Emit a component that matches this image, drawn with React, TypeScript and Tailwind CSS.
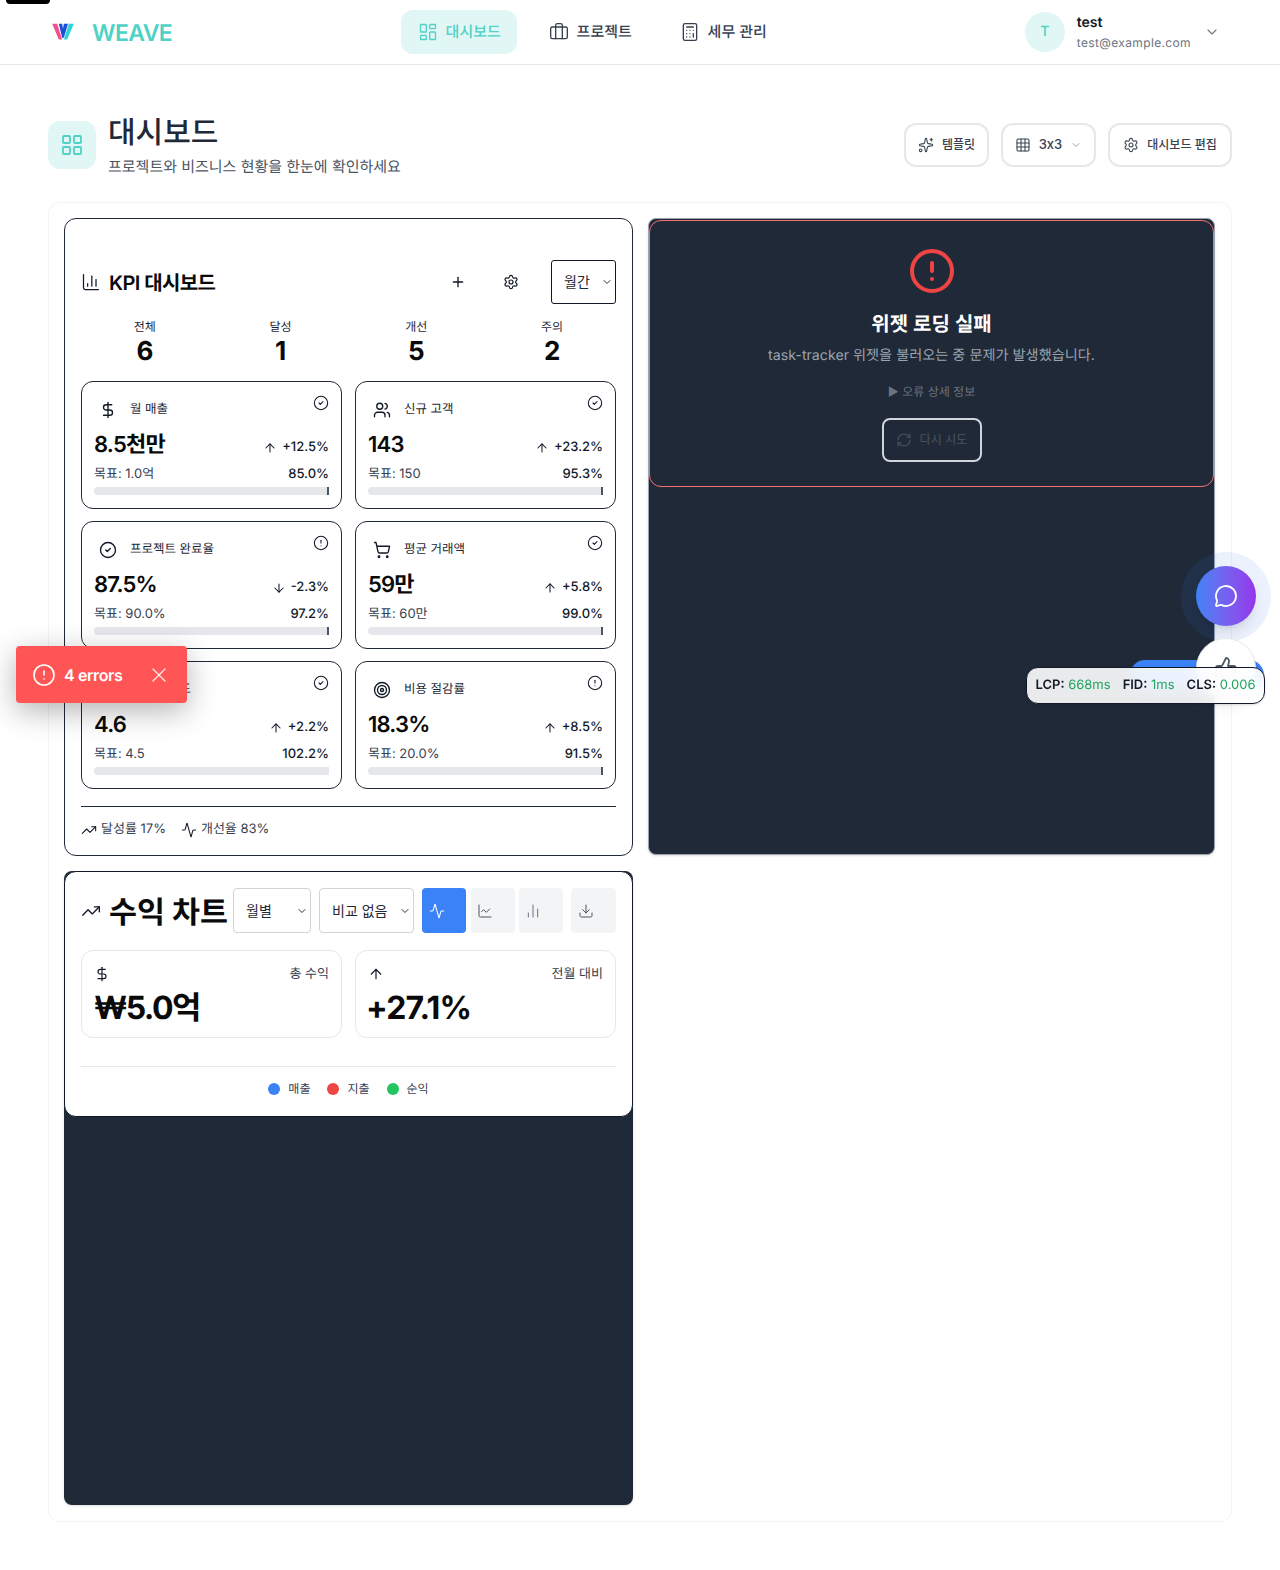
import React from 'react';
import {
  Activity, ArrowDown, ArrowUp, Briefcase, Calculator, ChartColumn, ChartLine, ChartNoAxesColumn, ChevronDown,
  CircleAlert, CircleCheck, DollarSign, Download, Grid3x3, LayoutDashboard, LayoutGrid, MessageCircle, Plus, RefreshCw,
  Settings, ShoppingCart, Sparkles, Star, Target, ThumbsUp, TrendingUp, Users, X,
} from 'lucide-react';

const kpis = [
  { icon: DollarSign, label: '월 매출', value: '8.5천만', up: true, delta: '+12.5%', target: '목표: 1.0억', pct: '85.0%', ok: true, tick: true },
  { icon: Users, label: '신규 고객', value: '143', up: true, delta: '+23.2%', target: '목표: 150', pct: '95.3%', ok: true, tick: true },
  { icon: CircleCheck, label: '프로젝트 완료율', value: '87.5%', up: false, delta: '-2.3%', target: '목표: 90.0%', pct: '97.2%', ok: false, tick: true },
  { icon: ShoppingCart, label: '평균 거래액', value: '59만', up: true, delta: '+5.8%', target: '목표: 60만', pct: '99.0%', ok: true, tick: true },
  { icon: Star, label: '고객 만족도', value: '4.6', up: true, delta: '+2.2%', target: '목표: 4.5', pct: '102.2%', ok: true, tick: false },
  { icon: Target, label: '비용 절감률', value: '18.3%', up: true, delta: '+8.5%', target: '목표: 20.0%', pct: '91.5%', ok: false, tick: true },
];

const stats = [
  { label: '전체', value: '6' },
  { label: '달성', value: '1' },
  { label: '개선', value: '5' },
  { label: '주의', value: '2' },
];

function Select({ label, className }: { label: string; className: string }) {
  return (
    <div className={`relative ${className}`}>
      <select className="h-full w-full appearance-none bg-transparent pl-3 text-sm text-[#1f2937]">
        <option>{label}</option>
      </select>
      <ChevronDown className="pointer-events-none absolute right-[2px] top-1/2 h-3 w-3 -translate-y-1/2 text-[#111827]" strokeWidth={1.8} />
    </div>
  );
}

function KpiCard({ kpi }: { kpi: (typeof kpis)[number] }) {
  const Icon = kpi.icon;
  const StatusIcon = kpi.ok ? CircleCheck : CircleAlert;
  const Arrow = kpi.up ? ArrowUp : ArrowDown;
  return (
    <div className="relative h-[128px] rounded-xl border border-[#1f2937] bg-white px-[12px] pt-[16px]">
      <StatusIcon className="absolute right-[12px] top-[13px] h-4 w-4 text-[#111827]" strokeWidth={1.6} />
      <div className="flex h-[24px] items-center">
        <span className="flex w-[28px] justify-center">
          <Icon className="h-[18px] w-[18px] text-[#111827]" strokeWidth={1.8} />
        </span>
        <span className="ml-[8px] text-[12.5px] text-[#1f2937]">{kpi.label}</span>
      </div>
      <div className="mt-[9px] flex h-[28px] items-center justify-between">
        <span className="text-[22px] font-semibold tracking-[-0.035em] text-[#0a0a0a]">{kpi.value}</span>
        <span className="mt-[5px] flex items-center gap-[5px] text-[13px] font-medium text-[#111827]">
          <Arrow className="h-[14px] w-[14px]" strokeWidth={1.8} />
          {kpi.delta}
        </span>
      </div>
      <div className="mt-[6px] flex h-[20px] items-center justify-between">
        <span className="text-[13px] text-[#374151]">{kpi.target}</span>
        <span className="text-[13px] font-medium text-[#111827]">{kpi.pct}</span>
      </div>
      <div className="mt-[2px] flex h-2 justify-end rounded-l-full rounded-r-sm bg-[#e5e7eb]">
        {kpi.tick && <div className="h-2 w-[2px] bg-[#475569]" />}
      </div>
    </div>
  );
}

function KpiWidget() {
  return (
    <div className="h-[638px] rounded-xl border border-[#1f2937] bg-white px-4 pt-[41px]">
      <div className="flex h-[44px] items-center">
        <ChartColumn className="h-5 w-5 text-[#111827]" strokeWidth={1.5} />
        <h2 className="ml-[8px] mt-[1px] text-xl font-semibold tracking-[-0.03em] text-[#0a0a0a]">KPI 대시보드</h2>
        <Plus className="ml-auto h-4 w-4 text-[#111827]" strokeWidth={2} />
        <Settings className="ml-[37px] h-4 w-4 text-[#111827]" strokeWidth={1.8} />
        <Select label="월간" className="ml-[32px] h-[44px] w-[65px] rounded-[3px] border border-[#111827]" />
      </div>
      <div className="mt-[15px] grid grid-cols-4 gap-2 text-center">
        {stats.map((s) => (
          <div key={s.label} className="flex flex-col items-center">
            <span className="text-xs leading-4 text-[#1f2937]">{s.label}</span>
            <span className="mt-[2px] h-[29px] text-[26px] font-bold leading-[30px] text-[#0a0a0a]">{s.value}</span>
          </div>
        ))}
      </div>
      <div className="mt-[15px] grid grid-cols-2 gap-x-[13px] gap-y-[12px]">
        {kpis.map((k) => (
          <KpiCard key={k.label} kpi={k} />
        ))}
      </div>
      <div className="mt-[17px] flex items-center gap-[15px] border-t border-[#1f2937] pt-[13px] text-[13px] text-[#374151]">
        <span className="flex items-center gap-1">
          <TrendingUp className="h-4 w-4 text-[#111827]" strokeWidth={1.6} />
          달성률 17%
        </span>
        <span className="flex items-center gap-1">
          <Activity className="h-4 w-4 text-[#111827]" strokeWidth={1.6} />
          개선율 83%
        </span>
      </div>
    </div>
  );
}

function ErrorWidget() {
  return (
    <div className="h-[637px] rounded-lg border border-[#9ca3af] bg-[#1f2937] pt-px shadow-sm">
      <div className="flex h-[267px] flex-col items-center rounded-xl border border-[#f87171] pt-[26px]">
        <CircleAlert className="h-12 w-12 text-[#ef4444]" strokeWidth={2} />
        <h3 className="mt-[15px] text-xl font-semibold leading-7 text-white">위젯 로딩 실패</h3>
        <p className="mt-[4px] text-[14.2px] leading-7 text-[#9ca3af]">task-tracker 위젯을 불러오는 중 문제가 발생했습니다.</p>
        <p className="mt-[12px] text-xs leading-5 text-[#6b7280]">▶ 오류 상세 정보</p>
        <button className="mt-[16px] flex h-[44px] w-[100px] items-center justify-center gap-2 rounded-lg border-2 border-[#d1d5db] text-xs text-[#4b5563]">
          <RefreshCw className="h-4 w-4" strokeWidth={1.6} />
          다시 시도
        </button>
      </div>
    </div>
  );
}

function RevenueWidget() {
  return (
    <div className="h-[634px] rounded-lg bg-[#1f2937] shadow-sm">
      <div className="h-[246px] rounded-xl border border-[#111827] bg-white px-4 pt-4">
        <div className="flex h-[45px] items-center">
          <TrendingUp className="h-5 w-5 text-[#111827]" strokeWidth={1.6} />
          <h2 className="ml-[8px] mt-[7px] whitespace-nowrap text-[30.4px] font-bold text-[#0a0a0a]">수익 차트</h2>
          <Select label="월별" className="ml-[5px] h-[45px] w-[78px] rounded-[4px] border border-[#d1d5db]" />
          <Select label="비교 없음" className="ml-2 h-[45px] w-[95px] rounded-[4px] border border-[#d1d5db]" />
          <div className="ml-2 flex h-[45px] w-[44px] items-center rounded-[4px] bg-[#3b82f6] pl-[7px]">
            <Activity className="h-4 w-4 text-white" strokeWidth={1.6} />
          </div>
          <div className="ml-[5px] flex h-[45px] w-[44px] items-center rounded-[4px] bg-[#f3f4f6] pl-[6px]">
            <ChartLine className="h-4 w-4 text-[#4b5563]" strokeWidth={1.5} />
          </div>
          <div className="ml-[4px] flex h-[45px] w-[44px] items-center rounded-[4px] bg-[#f3f4f6] pl-[6px]">
            <ChartNoAxesColumn className="h-4 w-4 text-[#6b7280]" strokeWidth={1.5} />
          </div>
          <div className="ml-[8px] flex h-[45px] w-[45px] items-center rounded-[4px] bg-[#f3f4f6] pl-[7px]">
            <Download className="h-4 w-4 text-[#4b5563]" strokeWidth={1.5} />
          </div>
        </div>
        <div className="mt-[17px] grid grid-cols-2 gap-[13px]">
          <div className="h-[88px] rounded-xl border border-[#e5e7eb] px-[12px] pt-[14px]">
            <div className="flex items-center justify-between">
              <DollarSign className="-mt-[2px] h-4 w-4 text-[#111827]" strokeWidth={1.8} />
              <span className="text-[13px] text-[#374151]">총 수익</span>
            </div>
            <p className="mt-[3px] text-[32px] font-bold leading-10 tracking-[-0.05em] text-[#0a0a0a]">₩5.0억</p>
          </div>
          <div className="h-[88px] rounded-xl border border-[#e5e7eb] px-[12px] pt-[14px]">
            <div className="flex items-center justify-between">
              <ArrowUp className="-mt-[2px] h-4 w-4 text-[#111827]" strokeWidth={1.8} />
              <span className="text-[13px] text-[#374151]">전월 대비</span>
            </div>
            <p className="-ml-[2px] mt-[3px] text-[32px] font-bold leading-10 tracking-tight text-[#0a0a0a]">+27.1%</p>
          </div>
        </div>
        <div className="mt-[28px] flex items-center justify-center gap-[17px] border-t border-[#e5e7eb] pt-[14px] text-xs text-[#374151]">
          <span className="flex items-center gap-2"><i className="h-3 w-3 rounded-full bg-[#3b82f6]" />매출</span>
          <span className="flex items-center gap-2"><i className="h-3 w-3 rounded-full bg-[#ef4444]" />지출</span>
          <span className="flex items-center gap-2"><i className="h-3 w-3 rounded-full bg-[#22c55e]" />순익</span>
        </div>
      </div>
    </div>
  );
}

function Header() {
  return (
    <header className="flex h-[65px] items-center border-b border-[#e5e7eb] bg-white pl-[50px] pr-[60px]">
      <svg viewBox="0 0 28 24" className="h-[20px] w-[26px]">
        <path d="M1 2h6l6 19h-4z" fill="#f0508f" />
        <path d="M27 2h-6l-6 19h4z" fill="#2dd4d4" />
        <path d="M9 2h4l1 6 1-6h5l-5 17h-2z" fill="#1d4ed8" />
      </svg>
      <span className="ml-[16px] mt-[2px] text-[23px] font-semibold tracking-tight text-[#4fd1c5]">WEAVE</span>
      <nav className="ml-[229px] flex items-center text-[15px] font-medium text-[#374151]">
        <a className="flex h-11 w-[116px] items-center justify-center gap-2 rounded-xl bg-[#e0f7f5] text-[#4fd1c5]">
          <LayoutDashboard className="h-5 w-5" strokeWidth={1.6} />
          대시보드
        </a>
        <a className="ml-[15px] flex h-11 w-[116px] items-center justify-center gap-2">
          <Briefcase className="h-5 w-5" strokeWidth={1.6} />
          프로젝트
        </a>
        <a className="ml-[17px] flex h-11 w-[116px] items-center justify-center gap-2">
          <Calculator className="h-5 w-5" strokeWidth={1.6} />
          세무 관리
        </a>
      </nav>
      <div className="ml-auto flex items-center">
        <div className="flex h-10 w-10 items-center justify-center rounded-full bg-[#e0f7f5] text-sm font-medium text-[#4fd1c5]">T</div>
        <div className="ml-3 mt-[2px] flex flex-col">
          <span className="text-sm font-semibold leading-5 text-[#111827]">test</span>
          <span className="text-xs leading-5 tracking-[0.03em] text-[#6b7280]">test@example.com</span>
        </div>
        <ChevronDown className="ml-[13px] h-4 w-4 text-[#6b7280]" strokeWidth={1.6} />
      </div>
    </header>
  );
}

function PageTitle() {
  return (
    <div className="flex items-start justify-between pl-[48px] pr-[48px] pt-[50px]">
      <div className="flex items-start gap-3">
        <div className="mt-[6px] flex h-12 w-12 items-center justify-center rounded-xl bg-[#e0f7f5]">
          <LayoutGrid className="h-6 w-6 text-[#4fd1c5]" strokeWidth={1.8} />
        </div>
        <div>
          <h1 className="text-3xl font-medium leading-9 text-[#1f2937]">대시보드</h1>
          <p className="mt-[4px] text-[15px] leading-6 text-[#4b5563]">프로젝트와 비즈니스 현황을 한눈에 확인하세요</p>
        </div>
      </div>
      <div className="mt-[8px] flex items-center gap-3 text-xs font-medium text-[#374151]">
        <button className="flex h-11 w-[85px] items-center justify-center gap-2 rounded-xl border-2 border-[#e5e7eb]">
          <Sparkles className="h-4 w-4" strokeWidth={1.6} />
          템플릿
        </button>
        <button className="flex h-11 w-[95px] items-center justify-center gap-2 rounded-xl border-2 border-[#e5e7eb] text-[13px] [font-feature-settings:'calt'_0]">
          <Grid3x3 className="h-4 w-4" strokeWidth={1.6} />
          3x3
          <ChevronDown className="h-3 w-3 text-[#9ca3af]" />
        </button>
        <button className="flex h-11 w-[124px] items-center justify-center gap-2 rounded-xl border-2 border-[#e5e7eb]">
          <Settings className="h-4 w-4" strokeWidth={1.6} />
          대시보드 편집
        </button>
      </div>
    </div>
  );
}

export default function App() {
  return (
    <div className="relative h-[1570px] overflow-hidden bg-white font-['Inter','Noto_Sans_CJK_KR',sans-serif] [text-rendering:geometricPrecision]">
      <div className="absolute left-[6px] top-0 z-50 h-[4px] w-[44px] rounded-b bg-black" />
      <Header />
      <PageTitle />
      <main className="ml-[48px] mr-[48px] mt-[23px] rounded-xl border border-[#f3f4f6] bg-white px-[15px] pb-[16px] pt-[15px]">
        <div className="grid grid-cols-[569px_567px] gap-x-[15px] gap-y-[15px]">
          <KpiWidget />
          <ErrorWidget />
          <RevenueWidget />
        </div>
      </main>

      {/* error toast */}
      <div className="absolute left-[16px] top-[646px] z-40 flex h-[57px] w-[171px] items-center rounded-sm bg-[#ff5555] pl-[16px] text-white shadow-[0_8px_30px_rgba(0,0,0,0.3)]">
        <CircleAlert className="h-[24px] w-[24px]" strokeWidth={1.6} />
        <span className="ml-[8px] text-base font-semibold tracking-tight">4 errors</span>
        <X className="ml-[25px] h-[24px] w-[24px] text-white/80" strokeWidth={1.5} />
      </div>

      {/* floating buttons */}
      <div className="absolute left-[1181px] top-[552px] z-30 h-[90px] w-[90px] rounded-full bg-[#3b82f6]/10" />
      <div className="absolute left-[1196px] top-[566px] z-30 flex h-[60px] w-[60px] items-center justify-center rounded-full bg-gradient-to-r from-[#3b82f6] to-[#9333ea] shadow-lg">
        <MessageCircle className="h-6 w-6 text-white" strokeWidth={1.8} />
      </div>
      <div className="absolute left-[1130px] top-[660px] z-20 h-[30px] w-[134px] rounded-2xl bg-[#3b82f6]" />
      <div className="absolute left-[1196px] top-[638px] z-30 flex h-[60px] w-[60px] items-center justify-center rounded-full border border-[#e5e7eb] bg-white shadow-lg">
        <ThumbsUp className="h-6 w-6 text-[#4b5563]" strokeWidth={1.8} />
      </div>
      <div className="absolute left-[1026px] top-[667px] z-40 flex h-[37px] w-[239px] items-center justify-center gap-3 rounded-xl border border-[#111827] bg-white/90 text-[13px] shadow backdrop-blur-sm">
        <span><b className="font-semibold text-[#111827]">LCP:</b> <span className="text-[#22a55e]">668ms</span></span>
        <span><b className="font-semibold text-[#111827]">FID:</b> <span className="text-[#22a55e]">1ms</span></span>
        <span><b className="font-semibold text-[#111827]">CLS:</b> <span className="text-[#22a55e]">0.006</span></span>
      </div>
    </div>
  );
}
